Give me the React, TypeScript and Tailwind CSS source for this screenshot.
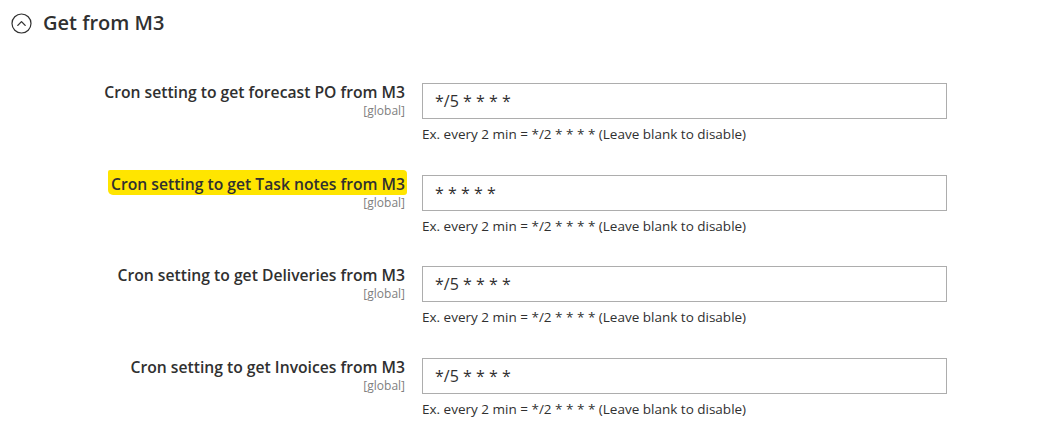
import React from 'react'

const rows = [
  { label: 'Cron setting to get forecast PO from M3', value: '*/5 * * * *', marked: false },
  { label: 'Cron setting to get Task notes from M3', value: '* * * * *', marked: true },
  { label: 'Cron setting to get Deliveries from M3', value: '*/5 * * * *', marked: false },
  { label: 'Cron setting to get Invoices from M3', value: '*/5 * * * *', marked: false },
]

function CollapseIcon() {
  return (
    <svg width="21" height="21" viewBox="0 0 21 21" fill="none" className="shrink-0">
      <circle cx="10.5" cy="10.5" r="9.5" stroke="#303030" strokeWidth="1.2" />
      <path d="M6.8 12.4 L10.5 8.6 L14.2 12.4" stroke="#303030" strokeWidth="1.3" strokeLinecap="round" strokeLinejoin="round" />
    </svg>
  )
}

function SettingRow({ label, value, marked }: { label: string; value: string; marked: boolean }) {
  return (
    <div className="flex h-[91.7px]">
      <div className="flex w-[422px] shrink-0 flex-col items-end pr-[17px]">
        <span className="relative text-[15.7px] font-semibold leading-[19px] text-[#303030]">
          {marked && (
            // marker-pen highlight drawn behind the label
            <span className="absolute bottom-[-1px] left-[-3px] right-[-2px] top-[-5px] rounded-[2px_4px_3px_5px] bg-[#ffe500]" />
          )}
          <span className="relative">{label}</span>
        </span>
        <span className="mt-[2px] text-[12px] leading-[13px] text-[#808080]">[global]</span>
      </div>
      <div className="flex w-[525px] flex-col">
        <div className="flex h-[36px] items-center border border-[#adadad] bg-white px-[12px] text-[16px] text-[#303030]">
          {value}
        </div>
        <div className="mt-[6px] text-[13.5px] leading-[18px] text-[#303030]">
          Ex. every 2 min = */2 * * * * (Leave blank to disable)
        </div>
      </div>
    </div>
  )
}

export default function App() {
  return (
    <div className="h-[443px] w-[1046px] bg-white font-['Open_Sans',sans-serif]">
      <div className="flex items-center gap-[11px] pl-[11px] pt-[11px]">
        <CollapseIcon />
        <h2 className="text-[20px] font-semibold leading-[24px] text-[#303030]">Get from M3</h2>
      </div>
      <div className="pt-[48px]">
        {rows.map((r) => (
          <SettingRow key={r.label} {...r} />
        ))}
      </div>
    </div>
  )
}
